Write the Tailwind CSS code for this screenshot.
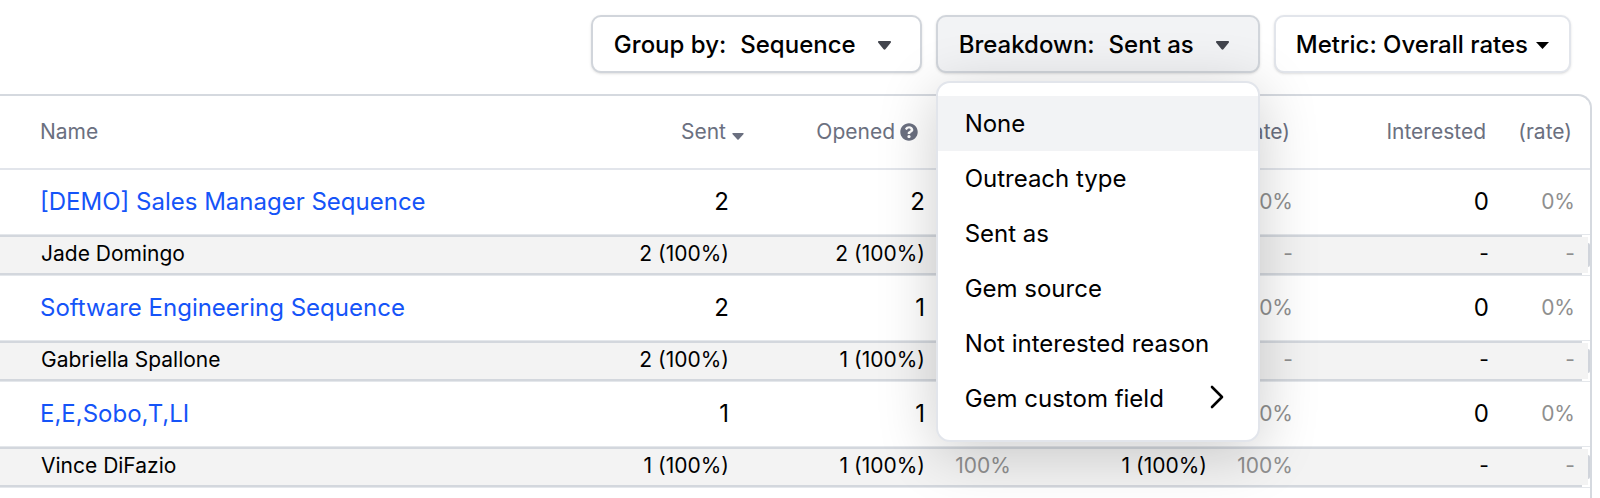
<!DOCTYPE html>
<html lang="en">
<head>
  <meta charset="UTF-8" />
  <meta name="viewport" content="width=device-width, initial-scale=1.0" />
  <title>Sequence Report</title>
  <script src="https://cdn.jsdelivr.net/npm/@tailwindcss/browser@4"></script>
</head>
<body class="bg-white text-black font-['Inter',sans-serif]">
  <!-- Toolbar -->
  <div class="flex justify-end gap-[14px] pt-[15px] pr-[29px] pb-[21px]">
    <button type="button" class="flex items-center h-[58px] px-[21px] pt-[2px] border-2 border-[#d1d5db] rounded-[10px] bg-white text-2xl font-[450] shadow-sm">
      <span>Group by:</span>
      <span class="ml-[14px]">Sequence</span>
      <svg class="ml-[22px] mr-2 w-[13px] h-[9px]" viewBox="0 0 13 9" fill="#42454d"><path d="M1 0h11c.9 0 1.300 1 .7 1.700L7.400 8.300c-.5.6-1.300.6-1.800 0L.3 1.700C-.3 1 .1 0 1 0z" /></svg>
    </button>

    <div class="relative">
      <button type="button" aria-haspopup="menu" aria-expanded="true" class="flex items-center h-[58px] px-[21px] pt-[2px] border-2 border-[#d1d5db] rounded-[10px] bg-[#f2f3f5] text-2xl font-[450] shadow-sm">
        <span>Breakdown:</span>
        <span class="ml-[14px]">Sent as</span>
        <svg class="ml-[22px] mr-2 w-[13px] h-[9px]" viewBox="0 0 13 9" fill="#42454d"><path d="M1 0h11c.9 0 1.300 1 .7 1.700L7.400 8.300c-.5.6-1.300.6-1.800 0L.3 1.700C-.3 1 .1 0 1 0z" /></svg>
      </button>
      <!-- Breakdown menu -->
      <div role="menu" class="absolute z-10 top-[66px] left-0 w-full pt-[13px] pb-[14px] border-2 border-[#e2e5eb] rounded-[14px] bg-white text-2xl shadow-[0_10px_60px_rgba(0,0,0,0.2)]">
        <button type="button" role="menuitem" class="flex items-center w-full h-[55px] px-[27px] bg-[#f2f3f5]">None</button>
        <button type="button" role="menuitem" class="flex items-center w-full h-[55px] px-[27px]">Outreach type</button>
        <button type="button" role="menuitem" class="flex items-center w-full h-[55px] px-[27px]">Sent as</button>
        <button type="button" role="menuitem" class="flex items-center w-full h-[55px] px-[27px]">Gem source</button>
        <button type="button" role="menuitem" class="flex items-center w-full h-[55px] px-[27px] whitespace-nowrap">Not interested reason</button>
        <button type="button" role="menuitem" class="flex items-center justify-between w-full h-[55px] pl-[27px] pr-[34px] pb-1 whitespace-nowrap">
          <span class="pt-1">Gem custom field</span>
          <svg class="w-[14px] h-[24px]" viewBox="0 0 14 24" fill="none" stroke="#000" stroke-width="2.600" stroke-linecap="round" stroke-linejoin="round"><path d="M2 2l10 10L2 22" /></svg>
        </button>
      </div>
    </div>

    <button type="button" class="flex items-center h-[58px] px-[20px] pt-[2px] border-2 border-[#e2e5eb] rounded-[10px] bg-white text-2xl font-[450] shadow-sm">
      <span>Metric: Overall rates</span>
      <svg class="ml-2 w-[13px] h-[7px]" viewBox="0 0 13 7"><path d="M0 0h13L6.500 7z" /></svg>
    </button>
  </div>

  <!-- Report table -->
  <div class="mr-2 pb-[10px] border-t-2 border-r-2 border-[#d5d9df] rounded-tr-[14px]">
    <table class="w-full table-fixed border-separate border-spacing-0 text-right">
      <colgroup>
        <col />
        <col class="w-[196px]" />
        <col class="w-[196px]" />
        <col class="w-[86px]" />
        <col class="w-[196px]" />
        <col class="w-[86px]" />
        <col class="w-[196px]" />
        <col class="w-[86px]" />
      </colgroup>
      <thead class="text-[21px] text-[#6b7080]">
        <tr class="h-[74px] *:border-b-2 *:border-[#e2e5eb] *:font-normal">
          <th class="pl-10 text-left">Name</th>
          <th>
            <span class="flex items-center justify-end gap-[6px]">Sent
              <svg class="mt-2 w-[12px] h-[7px]" viewBox="0 0 13 8" fill="currentColor"><path d="M.8 0h11.400c.7 0 1 .8.5 1.300L7.200 7.300c-.4.4-1 .4-1.400 0L.3 1.300C-.2.8.1 0 .8 0z" /></svg>
            </span>
          </th>
          <th class="pr-[22px]">
            <span class="flex items-center justify-end gap-[5px]">Opened
              <svg class="w-[18px] h-[18px]" viewBox="0 0 512 512" fill="currentColor"><path d="M504 256c0 136.997-111.043 248-248 248S8 392.997 8 256C8 119.083 119.043 8 256 8s248 111.083 248 248zM262.655 90c-54.497 0-89.255 22.957-116.549 63.758-3.536 5.286-2.353 12.415 2.715 16.258l34.699 26.310c5.205 3.947 12.621 3.008 16.665-2.122 17.864-22.658 30.113-35.797 57.303-35.797 20.429 0 45.698 13.148 45.698 32.958 0 14.976-12.363 22.667-32.534 33.976C247.128 238.528 216 254.941 216 296v4c0 6.627 5.373 12 12 12h56c6.627 0 12-5.373 12-12v-1.333c0-28.462 83.186-29.647 83.186-106.667 0-58.002-60.165-102-116.531-102zM256 338c-25.365 0-46 20.635-46 46 0 25.364 20.635 46 46 46s46-20.636 46-46c0-25.365-20.635-46-46-46z" /></svg>
            </span>
          </th>
          <th class="pr-[18px]">(rate)</th>
          <th class="pr-[18px]">Replied</th>
          <th class="pr-[18px]">(rate)</th>
          <th class="pr-[18px]">Interested</th>
          <th class="pr-[18px]">(rate)</th>
        </tr>
      </thead>
      <tbody id="rows"></tbody>
    </table>
  </div>

  <script>
    const rows = [
      {
        name: "[DEMO] Sales Manager Sequence",
        values: ["2", "2", "100%", "0", "0%", "0", "0%"],
        sender: "Jade Domingo",
        details: ["2 (100%)", "2 (100%)", "100%", "-", "-", "-", "-"]
      },
      {
        name: "Software Engineering Sequence",
        values: ["2", "1", "50%", "0", "0%", "0", "0%"],
        sender: "Gabriella Spallone",
        details: ["2 (100%)", "1 (100%)", "50%", "-", "-", "-", "-"]
      },
      {
        name: "E,E,Sobo,T,LI",
        values: ["1", "1", "100%", "0", "0%", "0", "0%"],
        sender: "Vince DiFazio",
        details: ["1 (100%)", "1 (100%)", "100%", "1 (100%)", "100%", "-", "-"]
      }
    ];

    // columns 2, 4 and 6 hold the rates
    const isRate = (i) => i === 2 || i === 4 || i === 6;

    // rounded end of a breakdown row, on top of its last cell
    const rowEnd = `
      <span class="absolute inset-y-0 right-0 w-2 border-y-2 border-r-2 border-white"></span>
      <span class="absolute inset-y-[8px] right-0 w-[2px] rounded-r-full bg-[#d0d4db]"></span>
    `;

    document.getElementById("rows").innerHTML = rows.map(row => `
      <tr class="h-16 text-2xl">
        <td class="pl-10 text-left"><a href="#" class="text-[#1554f8]">${row.name}</a></td>
        ${row.values.map((v, i) => `<td class="${isRate(i) ? "pr-[15px] text-[21px] text-[#8f8f8f]" : "pr-[15px]"}">${v}</td>`).join("")}
      </tr>
      <tr class="h-[42px] text-[21px] leading-7 *:relative *:pb-[2px] *:border-y *:border-[#e4e7eb] *:bg-[#f3f3f3] *:shadow-[inset_0_2px_0_#d3d7dd,inset_0_-2px_0_#d3d7dd]">
        <td class="pl-[41px] text-left">${row.sender}</td>
        ${row.details.map((v, i) => `<td class="${isRate(i) ? "pr-[15px] text-[#8f8f8f]" : "pr-[15px]"}">${v}${i === 6 ? rowEnd : ""}</td>`).join("")}
      </tr>
    `).join("");
  </script>
</body>
</html>
